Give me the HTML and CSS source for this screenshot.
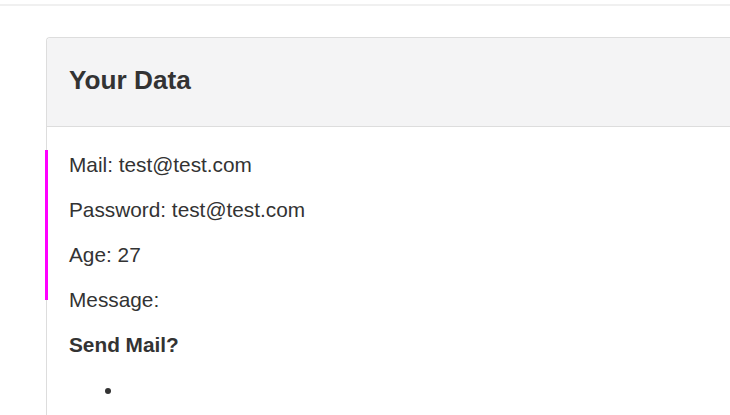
FILE: index.html
```html
<!DOCTYPE html>
<html>
<head>
<meta charset="utf-8">
<link rel="stylesheet" href="styles.css">
</head>
<body>
<div class="topbar"></div>
<div class="panel">
  <div class="panel-heading">
    <h3 class="panel-title">Your Data</h3>
  </div>
  <div class="panel-body">
    <p>Mail: test@test.com</p>
    <p>Password: test@test.com</p>
    <p>Age: 27</p>
    <p>Message:</p>
    <p class="strong">Send Mail?</p>
    <ul class="list">
      <li></li>
    </ul>
  </div>
  <div class="marker"></div>
</div>
</body>
</html>
```

FILE: styles.css
```css
html, body {
  margin: 0;
  padding: 0;
  background: #ffffff;
  overflow: hidden;
}
body {
  font-family: "Liberation Sans", Arial, sans-serif;
  color: #333333;
  width: 730px;
  height: 415px;
  display: flex;
  flex-direction: column;
}
.topbar {
  height: 4px;
  flex: none;
  border-bottom: 2px solid #f0f0f0;
}
.panel {
  position: relative;
  flex: 1;
  margin-top: 31px;
  margin-left: 46px;
  border-top: 1px solid #dddddd;
  border-left: 1px solid #dddddd;
  border-radius: 4px 0 0 0;
  background: #ffffff;
}
.panel-heading {
  background: #f4f4f5;
  border-bottom: 1px solid #dddddd;
  border-radius: 4px 0 0 0;
  padding: 26px 22px 30px 22px;
}
.panel-title {
  margin: 0;
  font-size: 26.2px;
  line-height: 32px;
  font-weight: bold;
  color: #333333;
}
.panel-body {
  padding: 23px 22px 0 22px;
  font-size: 20.8px;
  line-height: 30px;
}
.panel-body p {
  margin: 0 0 15px 0;
}
.strong {
  font-weight: bold;
}
.list {
  margin: 0;
  padding-left: 55px;
}
.list li {
  height: 30px;
}
.marker {
  position: absolute;
  left: -2px;
  top: 112px;
  width: 3px;
  height: 150px;
  background: #ff00ff;
}
```
